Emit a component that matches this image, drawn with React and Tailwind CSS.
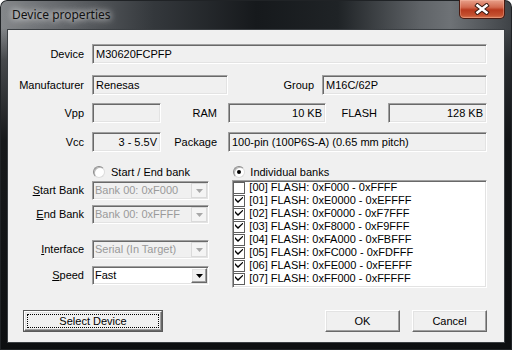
import React from 'react';

const sunken =
  'border border-t-[#a0a0a0] border-l-[#a0a0a0] border-b-white border-r-white shadow-[inset_1px_1px_0_#696969,inset_-1px_-1px_0_#e3e3e3]';
const raised =
  'bg-[#f0f0f0] border border-t-white border-l-white border-b-[#696969] border-r-[#696969] shadow-[inset_-1px_-1px_0_#a0a0a0,inset_1px_1px_0_#e3e3e3]';

const banks = [
  { id: '00', range: '0xF000 - 0xFFFF', on: false },
  { id: '01', range: '0xE0000 - 0xEFFFF', on: true },
  { id: '02', range: '0xF0000 - 0xF7FFF', on: true },
  { id: '03', range: '0xF8000 - 0xF9FFF', on: true },
  { id: '04', range: '0xFA000 - 0xFBFFF', on: true },
  { id: '05', range: '0xFC000 - 0xFDFFF', on: true },
  { id: '06', range: '0xFE000 - 0xFEFFF', on: true },
  { id: '07', range: '0xFF000 - 0xFFFFF', on: true },
];

function Field({ className, right, children }) {
  return (
    <div
      className={`h-[20px] bg-[#f0f0f0] flex items-center px-[3px] whitespace-nowrap overflow-hidden ${sunken} ${
        right ? 'justify-end' : ''
      } ${className}`}
    >
      {children}
    </div>
  );
}

function Arrow({ color }) {
  return (
    <svg width="7" height="4" viewBox="0 0 7 4">
      <path d="M0 0h7L3.5 4z" fill={color} />
    </svg>
  );
}

function Combo({ value, disabled }) {
  return (
    <div
      className={`ml-[8px] w-[117px] h-[19px] flex items-center ${sunken} ${
        disabled ? 'bg-[#f0f0f0] text-[#9a9a9a]' : 'bg-white text-black'
      }`}
    >
      <span className="flex-1 pl-[2px] whitespace-nowrap">{value}</span>
      {disabled ? (
        <div className="w-[16px] h-[15px] mr-[1px] flex items-center justify-center bg-[#f4f4f4] border border-[#dadada]">
          <Arrow color="#a8a8a8" />
        </div>
      ) : (
        <div className={`w-[16px] h-[15px] mr-[1px] flex items-center justify-center ${raised}`}>
          <Arrow color="#000" />
        </div>
      )}
    </div>
  );
}

function Radio({ checked }) {
  return (
    <span className="w-[12px] h-[12px] rounded-full bg-white border border-t-[#8a8a8a] border-l-[#8a8a8a] border-b-[#dcdcdc] border-r-[#dcdcdc] shadow-[inset_1px_1px_0_#b8b8b8] flex items-center justify-center">
      {checked && <span className="w-[4px] h-[4px] rounded-full bg-black" />}
    </span>
  );
}

function Check({ on }) {
  return (
    <span className="w-[12px] h-[12px] shrink-0 bg-white border border-[#5f5f5f] flex items-center justify-center">
      {on && (
        <svg width="8" height="7" viewBox="0 0 8 7">
          <path d="M0 3l3 3 5-5V-0.5L3 4 0 1z" fill="#000" />
        </svg>
      )}
    </span>
  );
}

export default function App() {
  return (
    <div className="w-[512px] h-[350px] bg-white font-['Liberation_Sans',Arial,sans-serif] text-[11px] text-black">
      <div className="w-[512px] h-[350px] rounded-t-[7px] flex flex-col shadow-[inset_0_0_0_1px_#202326] bg-[linear-gradient(180deg,rgba(0,0,0,0)_0px,rgba(0,0,0,0)_28px,rgba(20,22,25,0.55)_60px,rgba(14,16,18,0.92)_140px,#0d0f11_100%),linear-gradient(90deg,#85888b_0%,#6a6d71_10%,#34383c_30%,#16191c_50%,#1f2326_66%,#5f6367_82%,#6e7276_88%,#3e4246_100%)]">
        {/* Title bar */}
        <div className="h-[29px] flex items-start shrink-0">
          <div className="pl-[12px] pt-[7px] text-[12px] text-[#111] font-['Noto_Sans',sans-serif] leading-[16px] [text-shadow:0_0_6px_#fff,0_0_10px_rgba(255,255,255,0.7)]">
            Device properties
          </div>
          <div className="ml-auto mr-[7px] w-[46px] h-[19px] rounded-b-[5px] border border-t-0 border-[#4a1a10] bg-[linear-gradient(180deg,#e8a08a_0%,#d26a50_40%,#b83a1e_55%,#c4502f_85%,#d87a55_100%)] shadow-[inset_0_0_0_1px_rgba(255,200,180,0.35)] flex items-center justify-center">
            <svg width="16" height="12" viewBox="0 0 16 12">
              <path d="M3.5 2.5l9 7M12.5 2.5l-9 7" stroke="#3a1a12" strokeWidth="4.5" strokeLinecap="square" />
              <path d="M3.5 2.5l9 7M12.5 2.5l-9 7" stroke="#fff" strokeWidth="2.6" strokeLinecap="square" />
            </svg>
          </div>
        </div>

        {/* Client area */}
        <div className="ml-[7px] w-[498px] h-[314px] bg-[#f0f0f0] border border-[#3b3f43] flex flex-col">
          <div className="w-[479px] flex flex-col">
            <div className="mt-[14px] flex items-center">
              <div className="w-[76px] text-right">Device</div>
              <Field className="ml-[8px] w-[395px]">M30620FCPFP</Field>
            </div>

            <div className="mt-[11px] flex items-center">
              <div className="w-[76px] text-right">Manufacturer</div>
              <Field className="ml-[8px] w-[136px]">Renesas</Field>
              <div className="w-[94px] pr-[8px] text-right">Group</div>
              <Field className="w-[165px]">M16C/62P</Field>
            </div>

            <div className="mt-[8px] flex items-center">
              <div className="w-[76px] text-right">Vpp</div>
              <Field className="ml-[8px] w-[69px]" />
              <div className="w-[67px] pr-[11px] text-right">RAM</div>
              <Field className="w-[98px]" right>10 KB</Field>
              <div className="w-[62px] pr-[11px] text-right">FLASH</div>
              <Field className="w-[99px]" right>128 KB</Field>
            </div>

            <div className="mt-[9px] flex items-center">
              <div className="w-[76px] text-right">Vcc</div>
              <Field className="ml-[8px] w-[69px]" right>3 - 5.5V</Field>
              <div className="w-[67px] pr-[11px] text-right">Package</div>
              <Field className="w-[259px]">100-pin (100P6S-A) (0.65 mm pitch)</Field>
            </div>

            <div className="mt-[12px] flex">
              <div className="w-[220px] flex flex-col">
                <div className="h-[16px] pl-[85px] flex items-center gap-[6px]">
                  <Radio />
                  <span>Start / End bank</span>
                </div>
                <div className="mt-[1px] flex items-center">
                  <div className="w-[76px] text-right">
                    <u>S</u>tart Bank
                  </div>
                  <Combo value="Bank 00: 0xF000" disabled />
                </div>
                <div className="mt-[5px] flex items-center">
                  <div className="w-[76px] text-right">
                    <u>E</u>nd Bank
                  </div>
                  <Combo value="Bank 00: 0xFFFF" disabled />
                </div>
                <div className="mt-[16px] flex items-center">
                  <div className="w-[76px] text-right">
                    <u>I</u>nterface
                  </div>
                  <Combo value="Serial (In Target)" disabled />
                </div>
                <div className="mt-[7px] flex items-center">
                  <div className="w-[76px] text-right">
                    <u>S</u>peed
                  </div>
                  <Combo value="Fast" />
                </div>
              </div>

              <div className="w-[259px] ml-[8px] flex flex-col">
                <div className="h-[16px] pl-[1px] flex items-center gap-[5px]">
                  <Radio checked />
                  <span>Individual banks</span>
                </div>
                <div className={`h-[108px] bg-white ${sunken} overflow-hidden`}>
                  {banks.map((b) => (
                    <div key={b.id} className="h-[13px] flex items-center gap-[4px] leading-[13px] whitespace-nowrap">
                      <Check on={b.on} />
                      <span>
                        [{b.id}] FLASH: {b.range}
                      </span>
                    </div>
                  ))}
                </div>
              </div>
            </div>

            <div className="mt-[22px] flex items-center">
              <button className="ml-[15px] w-[140px] h-[22px] border border-[#5a5a5a] bg-[#f0f0f0] p-0">
                <div className={`w-full h-full flex items-center justify-center ${raised} outline-1 outline-dotted outline-black -outline-offset-4`}>
                  Select Device
                </div>
              </button>
              <button className={`ml-auto w-[75px] h-[22px] flex items-center justify-center ${raised}`}>OK</button>
              <button className={`ml-[12px] w-[75px] h-[22px] flex items-center justify-center ${raised}`}>Cancel</button>
            </div>
          </div>
        </div>
      </div>
    </div>
  );
}
